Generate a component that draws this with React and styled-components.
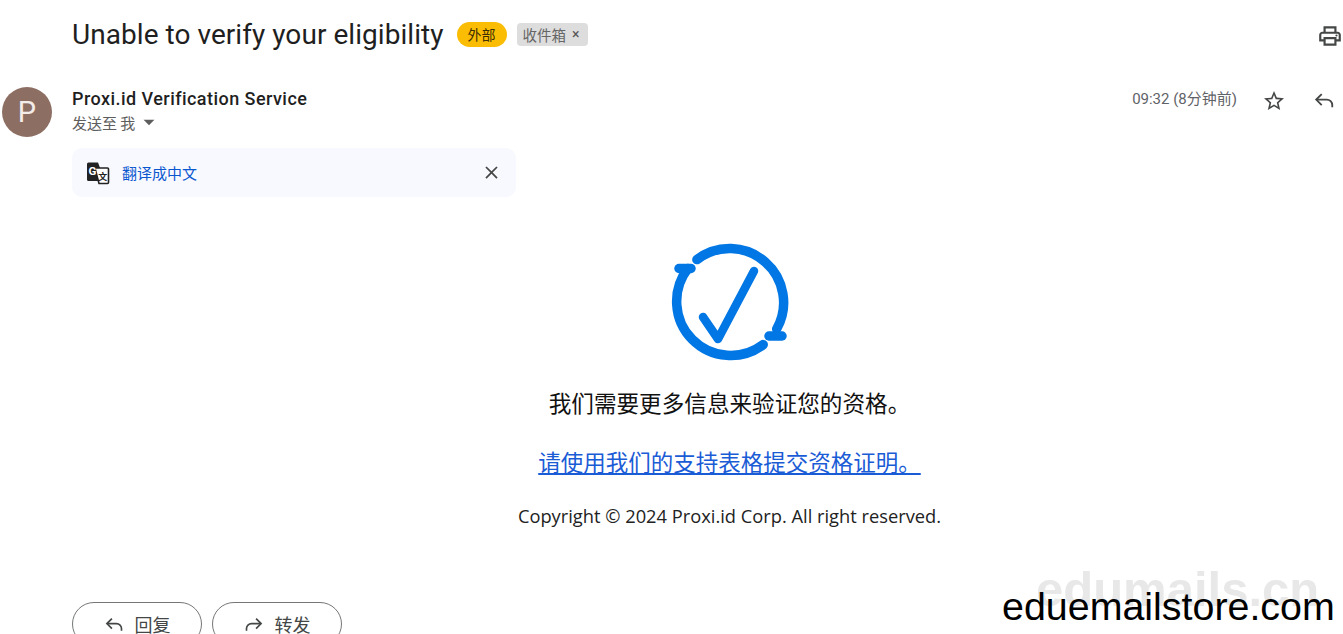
import React from 'react'
import styled, { createGlobalStyle } from 'styled-components'
import { MdOutlinePrint, MdStarBorder, MdClose, MdArrowDropDown } from 'react-icons/md'

const CJK = '"Noto Sans CJK SC", sans-serif'

const GlobalStyle = createGlobalStyle`
  html, body { margin: 0; padding: 0; background: #fff; }
  body { font-family: Roboto, ${CJK}; overflow: hidden; }
`

const ReplyIcon = ({ size = 22, flip }) => (
  <svg width={size} height={size} viewBox="0 0 24 24" fill="none" stroke="currentColor" strokeWidth="2"
    style={flip ? { transform: 'scaleX(-1)' } : undefined}>
    <path d="M9.5 5.5 L3.5 11.5 L9.5 17.5" />
    <path d="M3.5 11.5 H15 a6 6 0 0 1 6 6 V20" />
  </svg>
)

const TranslateIcon = () => (
  <svg width="24" height="24" viewBox="0 0 24 24">
    <path d="M2.5 1.5 H12 L19 20 H2.5 a1.5 1.5 0 0 1 -1.5 -1.5 V3 a1.5 1.5 0 0 1 1.5 -1.5 Z" fill="#222" />
    <path d="M9 7 H21.5 a1 1 0 0 1 1 1 V21.5 a1 1 0 0 1 -1 1 H13 Z" fill="#fff" stroke="#222" strokeWidth="1.6" />
    <text x="2.4" y="14" fontSize="11.5" fontWeight="700" fill="#fff" fontFamily="Roboto, sans-serif">G</text>
    <text x="12.2" y="18.5" fontSize="9" fontWeight="700" fill="#222" fontFamily="'Noto Sans CJK SC', sans-serif">文</text>
  </svg>
)

const VerifyIcon = () => (
  <svg width="118" height="122" viewBox="0 0 118 122" fill="none" stroke="#0077e4" strokeWidth="9.5" strokeLinecap="round">
    <path d="M25.9 18.6 A54 54 0 0 1 105.7 88" />
    <path d="M92.2 103.6 A54 54 0 0 1 17 27.4" />
    <path d="M8 27.5 H20" />
    <path d="M98 95 H111" />
    <path d="M32 76 L47 98 L83 30" strokeWidth="8.5" strokeLinejoin="round" />
  </svg>
)

export default function App() {
  return (
    <>
      <GlobalStyle />
      <Page>
        <TitleRow>
          <Title>Unable to verify your eligibility</Title>
          <ExternalTag>外部</ExternalTag>
          <InboxTag>收件箱<TagClose>×</TagClose></InboxTag>
          <PrintButton><MdOutlinePrint size={26} /></PrintButton>
        </TitleRow>

        <SenderRow>
          <Avatar>P</Avatar>
          <SenderInfo>
            <SenderName>Proxi.id Verification Service</SenderName>
            <SentTo>发送至 我<MdArrowDropDown size={26} /></SentTo>
          </SenderInfo>
          <Time>09:32 (8分钟前)</Time>
          <MetaIcon $gap={25}><MdStarBorder size={24} /></MetaIcon>
          <MetaIcon $gap={27}><ReplyIcon /></MetaIcon>
        </SenderRow>

        <TranslateBar>
          <TranslateIcon />
          <TranslateLink>翻译成中文</TranslateLink>
          <BarClose><MdClose size={21} /></BarClose>
        </TranslateBar>

        <Body>
          <VerifyIcon />
          <Heading>我们需要更多信息来验证您的资格。</Heading>
          <FormLink href="#">请使用我们的支持表格提交资格证明。</FormLink>
          <Copyright>Copyright © 2024 Proxi.id Corp. All right reserved.</Copyright>
        </Body>

        <Actions>
          <ActionButton><ReplyIcon size={20} />回复</ActionButton>
          <ActionButton><ReplyIcon size={20} flip />转发</ActionButton>
        </Actions>

        <WatermarkBack>edumails.cn</WatermarkBack>
        <WatermarkFront>eduemailstore.com</WatermarkFront>
      </Page>
    </>
  )
}

const Page = styled.div`
  position: relative;
  width: 1343px;
  height: 634px;
  overflow: hidden;
  background: #fff;
`

const TitleRow = styled.div`
  display: flex;
  align-items: center;
  height: 40px;
  padding: 14px 0 0 72px;
`

const Title = styled.h1`
  margin: 0;
  font-family: Roboto, ${CJK};
  font-size: 28px;
  font-weight: 400;
  color: #1f1f1f;
  letter-spacing: 0.05px;
  white-space: nowrap;
`

const ExternalTag = styled.span`
  margin-left: 13px;
  width: 50px;
  height: 25px;
  border-radius: 13px;
  background: #fbbc04;
  color: #3c2f00;
  font-family: ${CJK};
  font-size: 14px;
  line-height: 25px;
  text-align: center;
`

const InboxTag = styled.span`
  display: flex;
  align-items: center;
  margin-left: 10px;
  width: 71px;
  height: 23px;
  padding-left: 6px;
  box-sizing: border-box;
  border-radius: 4px;
  background: #dddddd;
  color: #666;
  font-family: ${CJK};
  font-size: 14.5px;
`

const TagClose = styled.span`
  margin-left: 6px;
  font-family: Roboto, sans-serif;
  font-size: 14px;
  color: #555;
`

const PrintButton = styled.span`
  display: flex;
  margin: 4px 0 0 auto;
  color: #444746;
`

const SenderRow = styled.div`
  display: flex;
  align-items: flex-start;
  padding: 33px 8px 0 2px;
`

const Avatar = styled.div`
  flex: none;
  width: 50px;
  height: 50px;
  border-radius: 50%;
  background: #8d6e63;
  color: #f3ece9;
  font-size: 29px;
  line-height: 50px;
  text-align: center;
`

const SenderInfo = styled.div`
  margin-left: 20px;
  flex: 1;
`

const SenderName = styled.div`
  font-size: 18px;
  font-weight: 500;
  line-height: 24px;
  letter-spacing: 0.45px;
  color: #1f1f1f;
`

const SentTo = styled.div`
  display: flex;
  align-items: center;
  margin-top: -1px;
  height: 24px;
  font-family: ${CJK};
  font-size: 15px;
  color: #5e5e5e;

  svg { margin-left: 1px; }
`

const Time = styled.div`
  font-size: 15px;
  line-height: 24px;
  color: #5f6368;
  font-family: Roboto, ${CJK};
`

const MetaIcon = styled.span`
  display: flex;
  margin-left: ${p => p.$gap}px;
  margin-top: 2px;
  color: #444746;
`

const TranslateBar = styled.div`
  display: flex;
  align-items: center;
  box-sizing: border-box;
  width: 444px;
  height: 49px;
  margin: 11px 0 0 72px;
  padding: 0 14px;
  border-radius: 10px;
  background: #f8f9fe;
`

const TranslateLink = styled.a`
  margin-left: 12px;
  font-family: ${CJK};
  font-size: 15px;
  color: #0b57d0;
`

const BarClose = styled.span`
  display: flex;
  margin-left: auto;
  color: #444746;
`

const Body = styled.div`
  display: flex;
  flex-direction: column;
  align-items: center;
  padding: 44px 0 0 116px;
`

const Heading = styled.div`
  margin-top: 23px;
  font-family: ${CJK};
  font-size: 22.6px;
  line-height: 34px;
  color: #111;
`

const FormLink = styled.a`
  margin-top: 24px;
  font-family: ${CJK};
  font-size: 22.5px;
  line-height: 34px;
  color: #1a5bd6;
  text-decoration: underline;
`

const Copyright = styled.div`
  margin-top: 25px;
  font-family: "Open Sans", sans-serif;
  font-size: 18.3px;
  line-height: 26px;
  color: #222;
`

const Actions = styled.div`
  display: flex;
  gap: 10px;
  padding: 73px 0 0 72px;
`

const ActionButton = styled.button`
  display: flex;
  align-items: center;
  justify-content: center;
  gap: 11px;
  width: 130px;
  height: 44px;
  padding: 0;
  background: #fff;
  border: 1px solid #747775;
  border-radius: 22px;
  color: #444746;
  font-family: ${CJK};
  font-size: 18px;
`

const WatermarkBack = styled.div`
  position: absolute;
  left: 1036px;
  top: 561px;
  font-family: "Liberation Sans", sans-serif;
  font-weight: 700;
  font-size: 49px;
  color: #e8e8e8;
  white-space: nowrap;
`

const WatermarkFront = styled.div`
  position: absolute;
  left: 1002px;
  top: 584px;
  font-family: "Liberation Sans", sans-serif;
  font-size: 39.4px;
  line-height: 44px;
  color: #000;
  white-space: nowrap;
`
